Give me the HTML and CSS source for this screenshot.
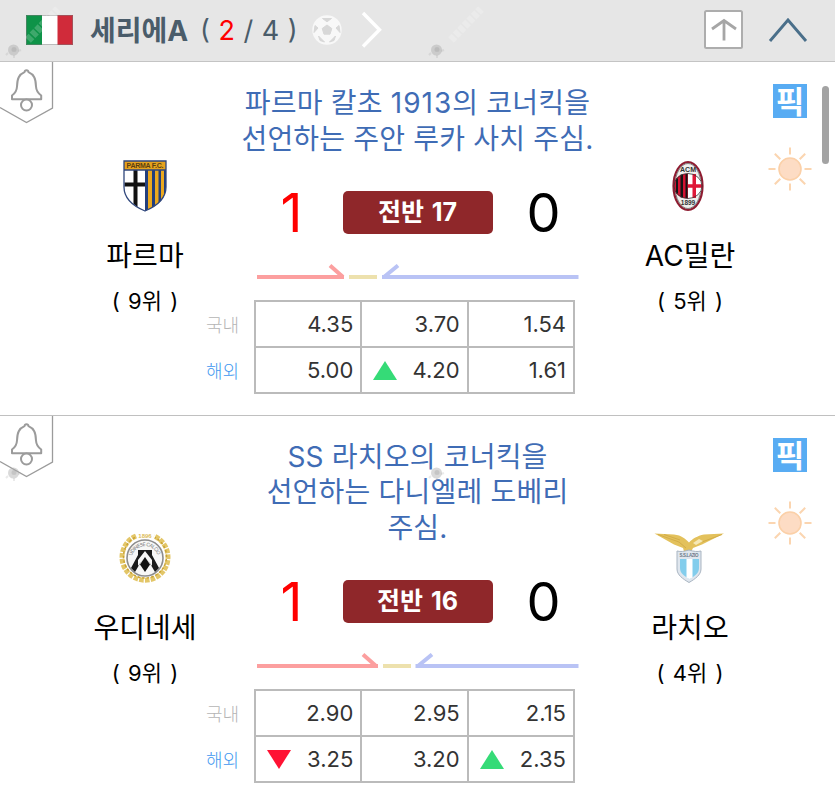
FILE: index.html
```html
<!DOCTYPE html>
<html lang="ko">
<head>
    <meta charset="UTF-8">
    <meta name="viewport" content="width=device-width, initial-scale=1.0">
    <title>세리에A</title>
    <link rel="stylesheet" href="styles.css">
</head>
<body>
    <!-- Shared icons -->
    <svg class="sprite" aria-hidden="true">
        <symbol id="icon-bell" viewBox="0 0 54 62">
            <path d="M0 45.500 26.500 60.500 52.500 46V0" fill="none" stroke="#9b9b9b" stroke-width="1.300"/>
            <path d="M12 37.300V33.500c3.600-2.500 4.800-4.500 5-9 .2-8 2-12 7.500-14.300C24.700 7.500 28.300 7.500 28.500 10.200 34 12.500 35.800 16.500 36 24.500c.2 4.500 1.800 6.500 5.200 9v3.800z" fill="none" stroke="#9b9b9b" stroke-width="2" stroke-linejoin="round"/>
            <circle cx="26.500" cy="43" r="5.500" fill="#fff" stroke="#9b9b9b" stroke-width="2"/>
        </symbol>
        <symbol id="icon-sun" viewBox="0 0 46 46">
            <circle cx="23" cy="23" r="11" fill="#fddcc4" stroke="#fbd0a8" stroke-width="1.600"/>
            <path d="M23 1.500v7M23 37.500v7M1.500 23h7M37.500 23h7M7.800 7.800l5.500 5.500M32.700 32.700l5.500 5.500M7.800 38.200l5.500-5.500M32.700 13.300l5.500-5.500" stroke="#fbd5b0" stroke-width="2"/>
        </symbol>
    </svg>

    <header class="league">
        <svg class="flag" viewBox="0 0 47 30">
            <path fill="#0e9348" d="M0 0h16v30H0z"/>
            <path fill="#fff" d="M16 0h16v30H16z"/>
            <path fill="#d02b3a" d="M31.500 0H47v30H31.500z"/>
            <path d="M.5.5h46v29H.5z" fill="none" stroke="#777" stroke-opacity=".5"/>
        </svg>
        <h1 class="league-name">세리에A</h1>
        <span class="league-count">( <em>2</em> / 4 )</span>
        <svg class="ball" viewBox="0 0 30 30">
            <circle cx="15" cy="15" r="13.700" fill="#f8f8f8" stroke="#f8f8f8" stroke-width="2"/>
            <path d="M15 10l4.800 3.500-1.800 5.700h-6l-1.800-5.700zM10.500 3.500h9L15 6.800zM27 10.500l1 7-4-4.500zM3 10.500l-1 7 4-4.500zM23.500 21l-1.500 4.500-4.500 1.500zM6.500 21l1.500 4.500 4.500 1.500z" fill="#d8d8d8" stroke="#d8d8d8" stroke-width="1" stroke-linejoin="round"/>
        </svg>
        <svg class="next" viewBox="0 0 24 40"><path d="M3 3l16.500 16.800L3 36.500" fill="none" stroke="#fff" stroke-width="3.400"/></svg>
        <svg class="to-top" viewBox="0 0 39 39">
            <rect x="1" y="1" width="37" height="37" rx="1.500" fill="#fff" stroke="#adadad" stroke-width="2"/>
            <path d="M20 30.500V11M8 19l12-8.500L32 19" fill="none" stroke="#a6a6a6" stroke-width="2.800"/>
        </svg>
        <svg class="collapse" viewBox="0 0 40 26"><path d="M2 24 20 3l18 21" fill="none" stroke="#4a6f8a" stroke-width="2.900"/></svg>
    </header>

    <main>
        <section class="match">
            <svg class="bell"><use href="#icon-bell"/></svg>
            <div class="team home">
                <svg class="crest" viewBox="0 0 76 54">
                    <path d="M17 2h42v26c0 12-9 19-21 24C26 47 17 40 17 28z" fill="#fff"/>
                    <path d="M38 11h21v17c0 12-9 19-21 24z" fill="#233f7d"/>
                    <path d="M41 11h4v37.500l-4 2zM48 11h3.500v33L48 46.500zM54 11h3v25l-3 5z" fill="#eba91f"/>
                    <path d="M26.500 11h4v37l-4-3zM17.500 23.500H38v4H17.500z" fill="#111"/>
                    <path d="M17 2h42v9H17z" fill="#e6a21d"/>
                    <text x="38" y="9.300" class="crest-text" font-size="7" textLength="37">PARMA F.C.</text>
                    <path d="M17 2h42v26c0 12-9 19-21 24C26 47 17 40 17 28zM17 11h42" fill="none" stroke="#30477c" stroke-width="1.300"/>
                </svg>
                <strong class="team-name">파르마</strong>
                <span class="rank">( 9위 )</span>
            </div>
            <div class="center">
                <p class="message">파르마 칼초 <span class="year">1913</span>의 코너킥을<br>선언하는 주안 루카 사치 주심.</p>
                <div class="score-row">
                    <span class="score lead">1</span>
                    <span class="period">전반 17</span>
                    <span class="score">0</span>
                </div>
                <svg class="momentum" viewBox="0 0 322 16">
                    <path d="M0 13h87M73 1.500 86 13" stroke="#fc9f9f"/>
                    <path d="M92 13h28" stroke="#ede1ad"/>
                    <path d="M125 13h196.500M141 1.500 127 13" stroke="#b9c3f5"/>
                </svg>
                <table class="odds">
                    <tr><th>국내</th><td>4.35</td><td>3.70</td><td>1.54</td></tr>
                    <tr class="overseas"><th>해외</th><td>5.00</td><td><i class="up"></i>4.20</td><td>1.61</td></tr>
                </table>
            </div>
            <div class="team away">
                <svg class="crest" viewBox="0 0 76 54">
                    <ellipse cx="36" cy="27" rx="14.500" ry="24" fill="#efefed" stroke="#8e1c31" stroke-width="2.200"/>
                    <ellipse cx="36" cy="27" rx="13" ry="22.500" fill="none" stroke="#555" stroke-width=".7"/>
                    <path d="M36 14.500c-9 0-14 5-14 12.500s5 12.500 14 12.500z" fill="#d41332"/>
                    <path d="M24 19.500h2v15h-2zM28.500 15.500h2.500v23h-2.500zM33.500 15h2v24h-2z" fill="#151515"/>
                    <path d="M36 14.500c9 0 14 5 14 12.500s-5 12.500-14 12.500z" fill="#fff"/>
                    <path d="M40.500 15h3.500v24h-3.500zM36 25.200h14v3.600H36z" fill="#df1737"/>
                    <ellipse cx="36" cy="27" rx="14" ry="12.500" fill="none" stroke="#333" stroke-width=".8"/>
                    <text x="36" y="12.500" class="crest-text dark" font-size="7">ACM</text>
                    <text x="36" y="46" class="crest-text dark" font-size="6.500">1899</text>
                </svg>
                <strong class="team-name">AC밀란</strong>
                <span class="rank">( 5위 )</span>
            </div>
            <div class="side">
                <span class="pick">픽</span>
                <svg class="sun"><use href="#icon-sun"/></svg>
            </div>
        </section>

        <section class="match">
            <svg class="bell"><use href="#icon-bell"/></svg>
            <div class="team home">
                <svg class="crest" viewBox="0 0 76 54">
                    <path d="M29 5A23 23 0 1 0 47 5" fill="none" stroke="#e3c668" stroke-width="5" stroke-dasharray="4.500 1.200"/>
                    <path d="M28 6.500A21.500 21.500 0 1 0 48 6.500" fill="none" stroke="#c9a336" stroke-width="1.500" stroke-dasharray="2.500 2"/>
                    <circle cx="38" cy="27" r="18" fill="#f7f7f7" stroke="#8d8d8d" stroke-width="1.600"/>
                    <path d="M31 19h14v5l7 13-4 4-10-17-10 17-4-4 7-13z" fill="#1b1b1b"/>
                    <path d="M38 20l-7 9v6l7-9 7 9v-6z" fill="#f7f7f7"/>
                    <path d="M38 26l5 7.500-5 7.500-5-7.500z" fill="#111"/>
                    <path id="arc" d="M25 25a13.500 13.500 0 0 1 26 0" fill="none"/>
                    <text font-size="5" fill="#777"><textPath href="#arc" textLength="34">UDINESE CALCIO</textPath></text>
                    <text x="38" y="6.500" class="crest-text gold" font-size="6">1896</text>
                </svg>
                <strong class="team-name">우디네세</strong>
                <span class="rank">( 9위 )</span>
            </div>
            <div class="center">
                <p class="message">SS 라치오의 코너킥을<br>선언하는 다니엘레 도베리<br>주심.</p>
                <div class="score-row">
                    <span class="score lead">1</span>
                    <span class="period">전반 16</span>
                    <span class="score">0</span>
                </div>
                <svg class="momentum" viewBox="0 0 322 16">
                    <path d="M0 13h121M106 1.500 119 13" stroke="#fc9f9f"/>
                    <path d="M126 13h28" stroke="#ede1ad"/>
                    <path d="M158.500 13h163M175 1.500 161 13" stroke="#b9c3f5"/>
                </svg>
                <table class="odds">
                    <tr><th>국내</th><td>2.90</td><td>2.95</td><td>2.15</td></tr>
                    <tr class="overseas"><th>해외</th><td><i class="down"></i>3.25</td><td>3.20</td><td><i class="up"></i>2.35</td></tr>
                </table>
            </div>
            <div class="team away">
                <svg class="crest" viewBox="0 0 76 54">
                    <path d="M2.500 2.500 22 3.500c8 1 11 4 15 8 4-4 8-6.500 15-8l20-1L50 13.500 41 17l-2.500 5h-6L31 17l-9-3.500z" fill="#e3c15c"/>
                    <path d="M6 3.500 27 11l7 6M70 3.500 50 11M12 3.500 28 9" fill="none" stroke="#d3ad48" stroke-width="1"/>
                    <path d="M41 12l6-4 4 2-7 4z" fill="#f6e8b5"/>
                    <path d="M25 20c4 1 7 .5 12-1 5 1.500 8 2 12 1v18c0 6-6 10-12 13.500C31 48 25 44 25 38z" fill="#dfe6ee" stroke="#a9b5c2" stroke-width="1"/>
                    <path d="M28 28h19v9c0 5-4 8-9.500 11C32 45 28 42 28 37z" fill="#83cdec"/>
                    <path d="M34.500 28h6v18.500l-3 1.500-3-1.500z" fill="#fff"/>
                    <text x="37" y="26" class="crest-text steel" font-size="4.500" textLength="19">S.S.LAZIO</text>
                </svg>
                <strong class="team-name">라치오</strong>
                <span class="rank">( 4위 )</span>
            </div>
            <div class="side">
                <span class="pick">픽</span>
                <svg class="sun"><use href="#icon-sun"/></svg>
            </div>
        </section>
    </main>

    <div class="scroll-thumb"></div>

    <!-- Faint repeating mark over the page -->
    <svg class="mark-layer" viewBox="0 0 835 799">
        <defs>
            <g id="mark">
                <circle cx="13.500" cy="50" r="5.500" fill="#aaa" fill-opacity=".45"/>
                <circle cx="14" cy="49.500" r="2.500" fill="#999" fill-opacity=".3"/>
                <path d="M8 53l-2 2M18 51l3-1M14 55v3" stroke="#aaa" stroke-opacity=".25" stroke-width="2"/>
            </g>
            <path id="mark-tail" d="M28 40 58 9" stroke="#fff" stroke-opacity=".2" stroke-width="8" stroke-dasharray="5 1.500"/>
        </defs>
        <use href="#mark"/>
        <use href="#mark-tail"/>
        <use href="#mark" x="423"/>
        <use href="#mark-tail" x="423"/>
        <use href="#mark" y="423"/>
        <use href="#mark" x="423" y="423"/>
    </svg>
</body>
</html>
```

FILE: styles.css
```css
:root {
    --slate: #4a5c6a;
    --blue: #3f6cb5;
    --line: #bbbbbb;
}

* {
    margin: 0;
    padding: 0;
    box-sizing: border-box;
}

body {
    position: relative;
    height: 799px;
    overflow: hidden;
    font-family: Inter, 'Noto Sans CJK KR', sans-serif;
    color: #000;
    background: #fff;
}

svg {
    display: block;
    flex-shrink: 0;
}

.sprite {
    position: absolute;
    width: 0;
    height: 0;
}

/* League header */
.league {
    display: flex;
    align-items: center;
    height: 62px;
    padding: 0 27px 2px 26px;
    background: #e6e6e6;
    border-bottom: 1px solid #c4c4c4;
    color: var(--slate);
}

.flag {
    width: 47px;
    height: 30px;
}

.league-name {
    margin-left: 17px;
    width: 98px;
    padding-top: 2px;
    font-size: 28px;
    font-weight: 700;
    line-height: 40px;
    white-space: nowrap;
}

.league-count {
    margin-left: 12px;
    width: 99px;
    padding-top: 2px;
    font-size: 27px;
    line-height: 40px;
    word-spacing: 1px;
    white-space: nowrap;
}

.league-count em {
    font-style: normal;
    color: #f00;
}

.ball {
    margin-left: 13px;
    width: 30px;
    height: 30px;
}

.next {
    margin-left: 18px;
    width: 24px;
    height: 40px;
}

.to-top {
    margin-left: auto;
    width: 39px;
    height: 39px;
}

.collapse {
    margin-left: 25px;
    width: 40px;
    height: 26px;
}

/* Match rows */
.match {
    display: grid;
    grid-template-columns: 54px 146px 435px 132px 68px;
    border-bottom: 1px solid #c0c0c0;
}

.bell {
    width: 54px;
    height: 62px;
}

.team {
    display: flex;
    flex-direction: column;
    align-items: center;
    align-self: center;
}

.home {
    padding-left: 36px;
}

.away {
    padding-right: 22px;
}

.crest {
    width: 76px;
    height: 54px;
}

.crest-text {
    font-family: 'Liberation Sans', sans-serif;
    font-weight: 700;
    text-anchor: middle;
    fill: #5b3f12;
}

.crest-text.gold {
    fill: #dcbc5c;
}

.crest-text.dark {
    fill: #333;
}

.crest-text.steel {
    fill: #6d7a88;
}

.team-name {
    margin-top: 23px;
    font-size: 28px;
    font-weight: 400;
    line-height: 40px;
    white-space: nowrap;
}

.rank {
    margin-top: 9px;
    font-size: 22px;
    line-height: 32px;
    word-spacing: 2px;
    white-space: nowrap;
}

.center {
    padding: 24px 0 20.5px;
}

.message {
    font-size: 28px;
    line-height: 35.8px;
    letter-spacing: 0.2px;
    text-align: center;
    color: var(--blue);
    white-space: nowrap;
}

.year {
    letter-spacing: 1px;
}

.score-row {
    display: grid;
    grid-template-columns: 102px 150px 102px;
    justify-content: center;
    align-items: center;
    height: 43px;
    margin-top: 33.5px;
    text-align: center;
}

.score {
    font-size: 54px;
    line-height: 43px;
}

.lead {
    color: #f00;
}

.period {
    height: 43px;
    border-radius: 5px;
    background: #8f272a;
    color: #fff;
    font-size: 25px;
    font-weight: 700;
    line-height: 43px;
    word-spacing: 2px;
}

.momentum {
    width: 322px;
    height: 16px;
    margin: 30px 0 0 57px;
    fill: none;
    stroke-width: 4;
}

/* Odds table */
.odds {
    margin: 20px 0 0 0;
    width: 375px;
    border-collapse: collapse;
    table-layout: fixed;
}

.odds th {
    width: 55px;
    padding-left: 6px;
    text-align: left;
    font-size: 18px;
    font-weight: 300;
    color: #b5b5b5;
}

.odds .overseas th {
    color: #3f97f0;
}

.odds td {
    height: 46px;
    padding-right: 7px;
    border: 2px solid var(--line);
    text-align: right;
    font-size: 22px;
    line-height: 40px;
    color: #333;
}

.up,
.down {
    float: left;
    margin: 11px 0 0 11px;
    border: 12px solid transparent;
}

.up {
    border-top: 0;
    border-bottom: 19px solid #35db77;
}

.down {
    border-bottom: 0;
    border-top: 19px solid #ff1233;
}

/* Pick badge and weather */
.side {
    width: 46px;
    padding-top: 22px;
}

.pick {
    display: block;
    width: 34px;
    height: 34px;
    margin: 0 auto;
    background: #58acf3;
    color: #fff;
    font-family: 'Noto Sans CJK KR', sans-serif;
    font-size: 31px;
    font-weight: 700;
    line-height: 31px;
    text-align: center;
}

.sun {
    width: 46px;
    height: 46px;
    margin-top: 28px;
}

/* Overlays */
.scroll-thumb {
    position: absolute;
    top: 86px;
    right: 6px;
    width: 7px;
    height: 78px;
    border-radius: 4px;
    background: #a3a3a3;
}

.mark-layer {
    position: absolute;
    top: 0;
    left: 0;
    width: 835px;
    height: 799px;
    pointer-events: none;
}
```
